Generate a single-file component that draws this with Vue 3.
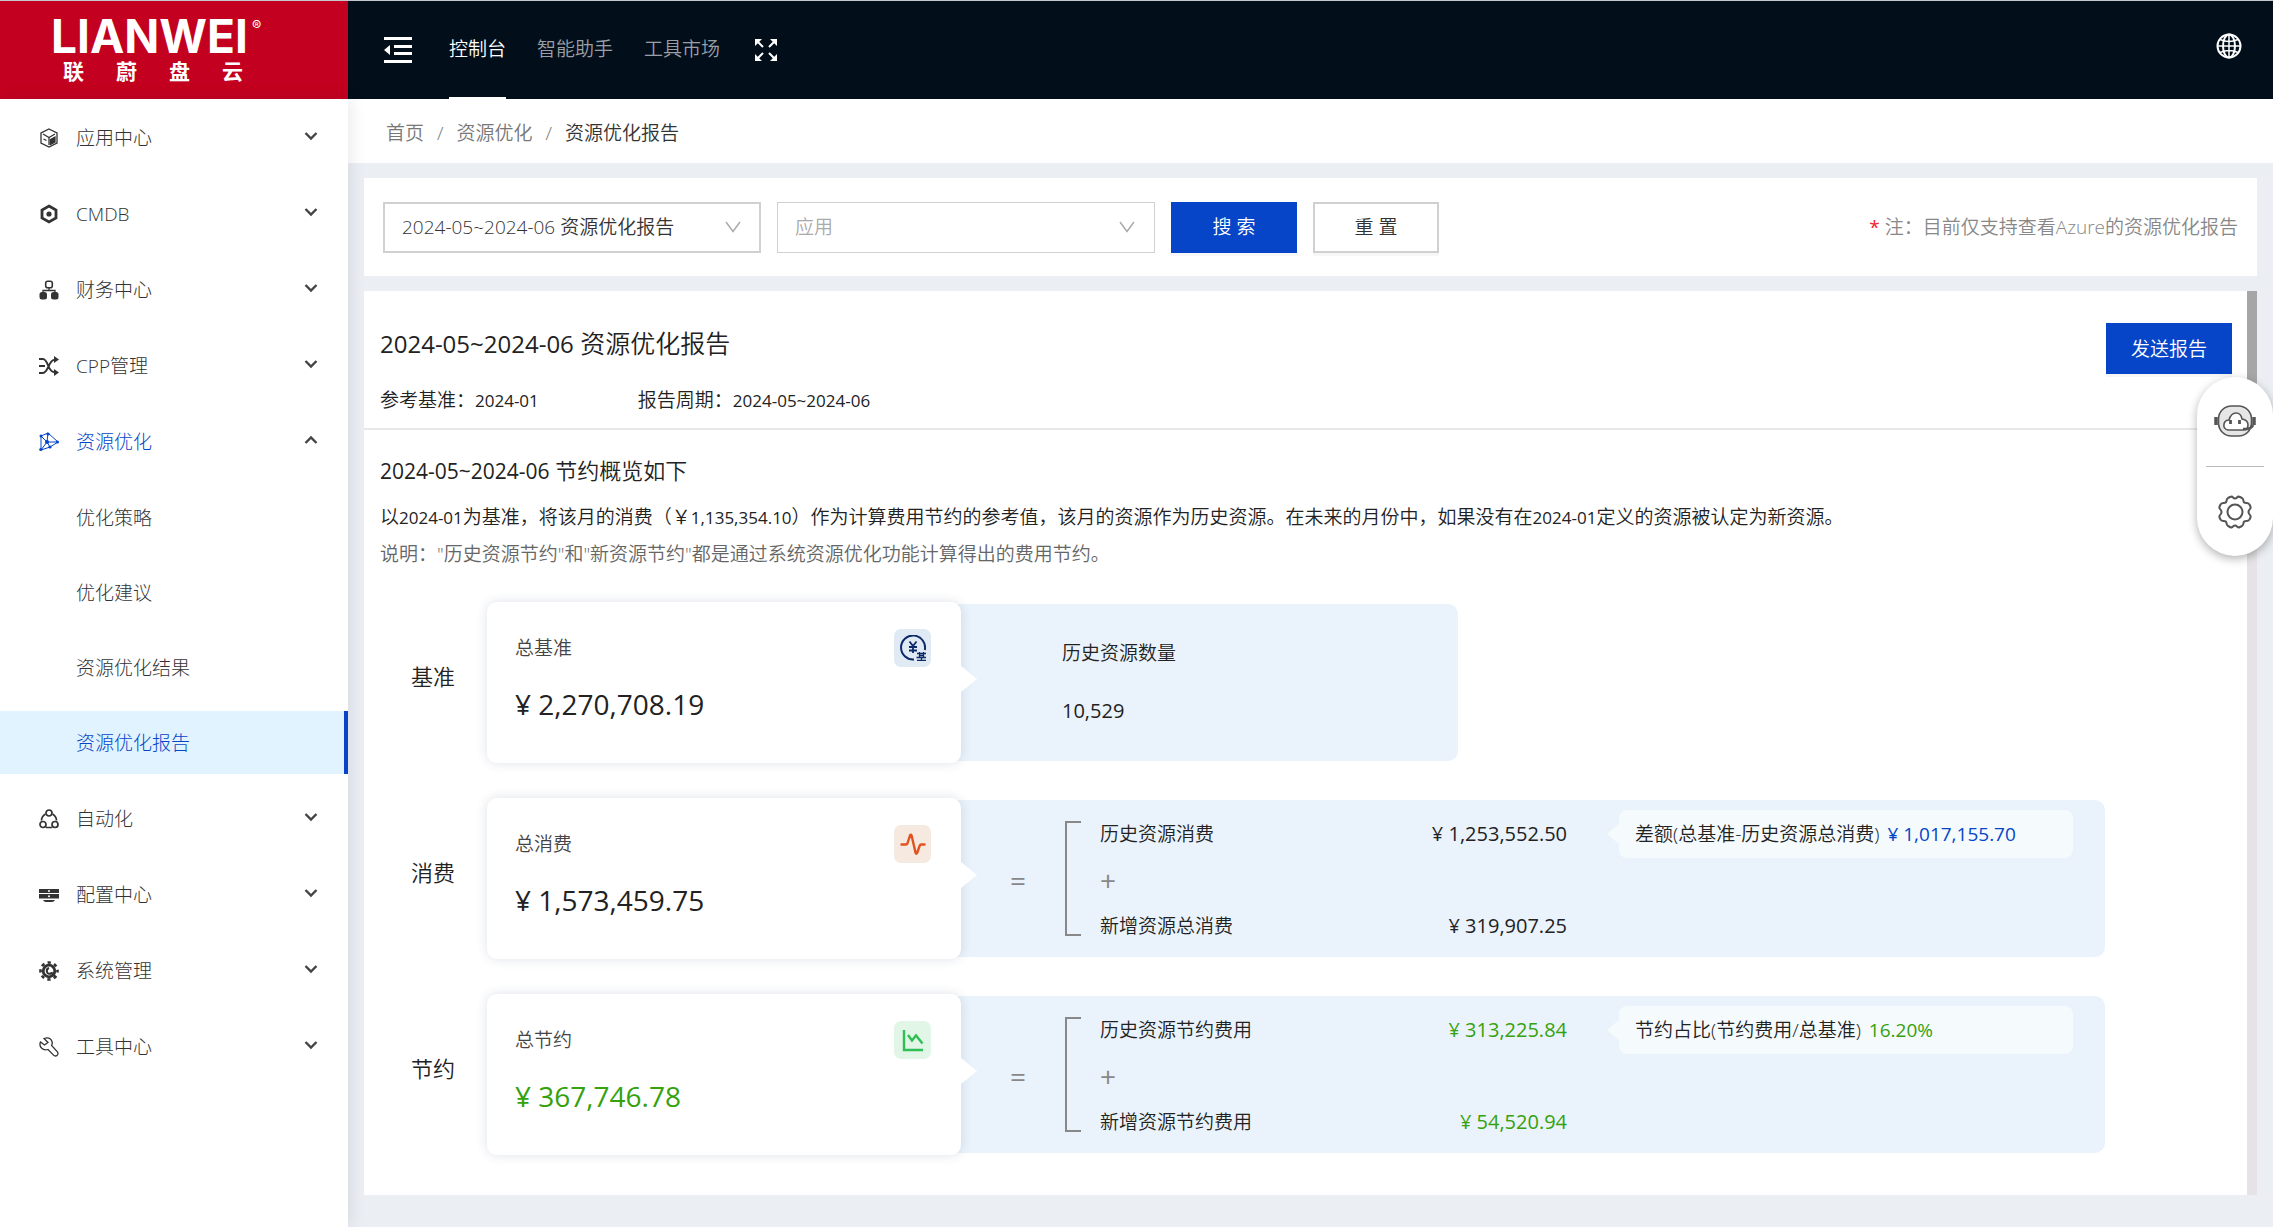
<script setup>
import { ref } from 'vue'

const tabs = ['控制台', '智能助手', '工具市场']
const period = ref('2024-05~2024-06 资源优化报告')
const app = ref('')

const menu = [
  { icon: 'cube', label: '应用中心' },
  { icon: 'hex', label: 'CMDB' },
  { icon: 'org', label: '财务中心' },
  { icon: 'shuffle', label: 'CPP管理' },
  {
    icon: 'mesh',
    label: '资源优化',
    children: ['优化策略', '优化建议', '资源优化结果', '资源优化报告'],
  },
  { icon: 'cycle', label: '自动化' },
  { icon: 'server', label: '配置中心' },
  { icon: 'gear', label: '系统管理' },
  { icon: 'wrench', label: '工具中心' },
]

const rows = [
  {
    label: '基准', title: '总基准', value: '¥ 2,270,708.19', icon: 'coin',
    count: { name: '历史资源数量', value: '10,529' },
  },
  {
    label: '消费', title: '总消费', value: '¥ 1,573,459.75', icon: 'pulse',
    parts: [
      { name: '历史资源消费', value: '¥ 1,253,552.50' },
      { name: '新增资源总消费', value: '¥ 319,907.25' },
    ],
    tip: { name: '差额(总基准-历史资源总消费)', value: '¥ 1,017,155.70', tone: 'blue' },
  },
  {
    label: '节约', title: '总节约', value: '¥ 367,746.78', icon: 'chart', tone: 'green',
    parts: [
      { name: '历史资源节约费用', value: '¥ 313,225.84' },
      { name: '新增资源节约费用', value: '¥ 54,520.94' },
    ],
    tip: { name: '节约占比(节约费用/总基准)', value: '16.20%', tone: 'green' },
  },
]
</script>

<template>
  <div class="page">
    <header class="topbar">
      <a class="brand" href="#">
        <span class="brand-en">LIANWEI<sup>®</sup></span>
        <span class="brand-cn"><span>联</span><span>蔚</span><span>盘</span><span>云</span></span>
      </a>
      <button class="icon-btn fold" aria-label="收起菜单">
        <svg width="28" height="26" viewBox="0 0 28 26" fill="#fff">
          <path d="M0 0h28v3H0zM10 8h18v3H10zM10 15h18v3H10zM0 23h28v3H0zM0 13l6-5v10z" />
        </svg>
      </button>
      <nav class="tabs">
        <a v-for="(t, i) in tabs" :key="t" href="#" :class="{ active: i === 0 }">{{ t }}</a>
      </nav>
      <button class="icon-btn" aria-label="全屏">
        <svg width="24" height="24" viewBox="0 0 24 24" fill="#fff" stroke="#fff" stroke-width="2">
          <path d="M3 3l6 6M21 3l-6 6M3 21l6-6M21 21l-6-6" />
          <path stroke="none" d="M1 1h7L1 8zM23 1v7l-7-7zM1 23v-7l7 7zM23 23h-7l7-7z" />
        </svg>
      </button>
      <button class="icon-btn globe" aria-label="语言">
        <svg width="26" height="26" viewBox="0 0 26 26" fill="none" stroke="#fff" stroke-width="2">
          <circle cx="13" cy="13" r="11.500" /><ellipse cx="13" cy="13" rx="6" ry="11.500" />
          <path d="M13 1v24M1 13h24M4 6.500q9 4 18 0M4 19.500q9-4 18 0" stroke-width="1.500" />
        </svg>
      </button>
    </header>

    <div class="body">
      <aside class="sidebar">
        <ul class="menu">
          <template v-for="m in menu" :key="m.label">
            <li>
              <a href="#" class="item" :class="{ open: m.children }">
                <svg class="mi" width="20" height="20" viewBox="0 0 20 20" fill="none" stroke="currentColor" stroke-width="1.300">
                  <template v-if="m.icon === 'cube'">
                    <path d="M10 1l8 4v10l-8 4-8-4V5z" /><path d="M4 6l6 3.500L16 6M10 9.500V17M4.500 11l3 1.500" />
                    <path d="M11.500 11.500l4.500-2.500v5l-4.500 2.500z" fill="currentColor" />
                  </template>
                  <template v-else-if="m.icon === 'hex'">
                    <path d="M10 2l7 4v8l-7 4-7-4V6z" stroke-width="2.800" /><circle cx="10" cy="10" r="2.600" fill="currentColor" stroke="none" />
                  </template>
                  <template v-else-if="m.icon === 'org'">
                    <rect x="6.700" y="1.200" width="6.600" height="6.600" rx="2" stroke-width="1.600" />
                    <path d="M10 8v2.500M4 13v-2.500h12V13" />
                    <rect x=".5" y="12" width="7.500" height="7.500" rx="2.500" fill="currentColor" stroke="none" />
                    <rect x="12" y="12" width="7.500" height="7.500" rx="2.500" fill="currentColor" stroke="none" />
                  </template>
                  <template v-else-if="m.icon === 'shuffle'">
                    <path d="M0 3h4c5 0 5 13 11 13h2M0 17h4c5 0 6-13 11-13h2M0 10h6" stroke-width="1.900" />
                    <path d="M15 0l5 3.500L15 7zM15 13l5 3.500-5 3.500z" fill="currentColor" stroke="none" />
                  </template>
                  <template v-else-if="m.icon === 'mesh'">
                    <path d="M2 4l7-3 10 9-8 5-9 3zM2 4l6 6L9 1M2 18l6-8h11M8 10l3 5" stroke-width="1" />
                    <g fill="currentColor" stroke="none"><circle cx="2" cy="4" r="1.500" /><circle cx="9" cy="2" r="1.600" /><circle cx="18.500" cy="10" r="1.500" /><circle cx="11" cy="15" r="1.600" /><circle cx="1.800" cy="17.500" r="1.600" /><circle cx="8" cy="10" r="2" /></g>
                  </template>
                  <template v-else-if="m.icon === 'cycle'">
                    <g stroke-width="1.700"><circle cx="10" cy="4" r="3" /><circle cx="4" cy="15.500" r="3" /><circle cx="16" cy="15.500" r="3" />
                      <path d="M6.500 5Q2.500 7.500 2.500 11.500M13.500 5q4 2.500 4 6.500M7 18.500h6" /></g>
                  </template>
                  <template v-else-if="m.icon === 'server'">
                    <g fill="currentColor" stroke="none">
                      <path d="M0 4h20v4H0zM0 9h20v4.500H0zM4 15h12q-1 2-3 2H7q-2 0-3-2z" />
                      <circle cx="10" cy="6" r="1" fill="#fff" /><circle cx="10" cy="11.300" r="1" fill="#fff" />
                    </g>
                  </template>
                  <template v-else-if="m.icon === 'gear'">
                    <circle cx="10" cy="10" r="5.800" stroke-width="2.800" />
                    <circle cx="10" cy="10" r="8.500" stroke-width="2.600" stroke-dasharray="3.300 3.370" stroke-dashoffset="1.650" />
                    <path d="M10 7q-3 1-2 4t5 1l4 5" stroke-width="2" />
                  </template>
                  <template v-else>
                    <path d="M5 1.500q6-2 8 3 .6 2-.4 4l6 6.500q1 2-.7 3.600-2 1-3.400-.5L9 12.500q-4 1.200-6.500-1.500T1.500 5l4 3L9 5.500z" />
                  </template>
                </svg>
                <span>{{ m.label }}</span>
                <svg class="chev" width="14" height="10" viewBox="0 0 14 10" fill="none" stroke="#444" stroke-width="2.400">
                  <path :d="m.children ? 'M1.500 8L7 2.500 12.500 8' : 'M1.500 2L7 7.500 12.500 2'" />
                </svg>
              </a>
            </li>
            <li v-if="m.children">
              <ul class="submenu">
                <li v-for="(c, i) in m.children" :key="c">
                  <a href="#" class="item sub" :class="{ current: i === 3 }">{{ c }}</a>
                </li>
              </ul>
            </li>
          </template>
        </ul>
      </aside>

      <div class="content">
        <nav class="crumbs">
          <a href="#">首页</a><span>/</span><a href="#">资源优化</a><span>/</span><b>资源优化报告</b>
        </nav>

        <main class="main">
          <section class="filters">
            <label class="field">
              <select v-model="period" aria-label="报告">
                <option>2024-05~2024-06 资源优化报告</option>
              </select>
              <svg width="16" height="12" viewBox="0 0 16 12" fill="none" stroke="#aaa" stroke-width="1.500"><path d="M1 1l7 9.500L15 1" /></svg>
            </label>
            <label class="field thin">
              <select v-model="app" aria-label="应用">
                <option value="">应用</option>
              </select>
              <svg width="16" height="12" viewBox="0 0 16 12" fill="none" stroke="#aaa" stroke-width="1.500"><path d="M1 1l7 9.500L15 1" /></svg>
            </label>
            <button class="btn primary">搜 索</button>
            <button class="btn">重 置</button>
            <p class="note"><i>*</i> 注：目前仅支持查看Azure的资源优化报告</p>
          </section>

          <section class="report">
            <div class="report-body">
              <div class="report-head">
                <div>
                  <h1><span>2024-05~2024-06</span> 资源优化报告</h1>
                  <div class="meta">
                    <div>参考基准：<span>2024-01</span></div>
                    <div>报告周期：<span>2024-05~2024-06</span></div>
                  </div>
                </div>
                <button class="btn primary">发送报告</button>
              </div>

              <div class="overview">
                <h2><span>2024-05~2024-06</span> 节约概览如下</h2>
                <p>以<span>2024-01</span>为基准，将该月的消费（￥<span>1,135,354.10</span>）作为计算费用节约的参考值，该月的资源作为历史资源。在未来的月份中，如果没有在<span>2024-01</span>定义的资源被认定为新资源。</p>
                <p class="muted">说明："历史资源节约"和"新资源节约"都是通过系统资源优化功能计算得出的费用节约。</p>
              </div>

              <div v-for="r in rows" :key="r.label" class="row">
                <h3>{{ r.label }}</h3>
                <div class="stage">
                  <div class="panel" :class="{ short: r.count }">
                    <div class="card">
                      <div class="card-top">
                        <span>{{ r.title }}</span>
                        <span class="badge" :class="r.icon">
                          <svg v-if="r.icon === 'coin'" width="26" height="26" viewBox="0 0 26 26" fill="none" stroke="#0b2a66" stroke-width="2">
                            <path d="M14 24.500A12 12 0 1 1 24.800 15" />
                            <path d="M9.500 6.500l3.500 4.500 3.500-4.500M13 11v7M9 12h8M9 15.500h8" stroke-width="1.800" />
                            <path d="M17 18.500h9M16.500 22.500h9.500M17 25.300h9M19.500 17v5.500M23.500 17v5.500M19.500 20.500h4M21.500 22v3" stroke-width="1.300" />
                          </svg>
                          <svg v-else-if="r.icon === 'pulse'" width="26" height="26" viewBox="0 0 26 26" fill="none" stroke="#e0531f" stroke-width="2.400" stroke-linejoin="round" stroke-linecap="round">
                            <path d="M1.500 13.500h4.500q1 0 1.400-1L10 4.500q.8-1.500 1.600 0l4 17.500q.7 1.500 1.500 0l2.500-7q.5-1.500 1.500-1.500h3.400" />
                          </svg>
                          <svg v-else width="26" height="26" viewBox="0 0 26 26" fill="none" stroke="#2fbf55" stroke-width="2.400">
                            <path d="M4 3v20h19M8 8l4 5.500L16 8.500l6.500 8" />
                          </svg>
                        </span>
                      </div>
                      <strong :class="r.tone">{{ r.value }}</strong>
                    </div>

                    <div v-if="r.count" class="count">
                      <span>{{ r.count.name }}</span>
                      <span class="num">{{ r.count.value }}</span>
                    </div>
                    <template v-else>
                      <span class="eq">=</span>
                      <span class="bracket"></span>
                      <div class="parts">
                        <div><span>{{ r.parts[0].name }}</span><span class="num" :class="r.tone">{{ r.parts[0].value }}</span></div>
                        <div class="plus">+</div>
                        <div><span>{{ r.parts[1].name }}</span><span class="num" :class="r.tone">{{ r.parts[1].value }}</span></div>
                      </div>
                      <div class="tip"><span>{{ r.tip.name }}</span><span class="tip-num" :class="r.tip.tone">{{ r.tip.value }}</span></div>
                    </template>
                  </div>
                </div>
              </div>
            </div>
            <div class="track"><div class="thumb"></div></div>
          </section>
        </main>
      </div>
    </div>

    <div class="float">
      <button aria-label="客服">
        <svg width="42" height="32" viewBox="0 0 42 32" fill="none" stroke="#555" stroke-width="1.600">
          <rect x="4.500" y="1" width="33" height="30" rx="13" fill="#e6e6e6" />
          <path d="M14 25q-5-1-4-6 1-4 5-4 2-7 7-7t6 6q6 1 6 6 0 5-5 5z" fill="#fff" />
          <path d="M16.500 15v4M25.500 15v4" stroke-width="2.800" /><path d="M2 12v8M40 12v8" stroke-width="3.500" />
          <path d="M39 20q-1 3-6 4h-4" stroke-width="2.500" />
        </svg>
      </button>
      <hr>
      <button aria-label="设置">
        <svg width="34" height="34" viewBox="0 0 34 34" fill="none" stroke="#555" stroke-width="2" stroke-linejoin="round">
          <circle cx="17" cy="17" r="7.500" />
          <path d="M12 2q2-1 3 .5 2 2 4 0 1-1.500 3-.5l2 1q1.500 1 1.500 3t3 2q2 0 3 1.500l1 2q.5 2-1 3-2 2.500 0 5 1.500 1 1 3l-1 2q-1 1.500-3 1.500-3 0-3 2t-1.500 3l-2 1q-2 1-3-.5-2-2-4 0-1 1.500-3 .5l-2-1q-1.500-1-1.500-3t-3-2q-2 0-3-1.500l-1-2q-.5-2 1-3 2-2.500 0-5-1.500-1-1-3l1-2q1-1.500 3-1.500 3 0 3-2t1.500-3z" />
        </svg>
      </button>
    </div>
  </div>
</template>

<style>
body {
  margin: 0;
}
</style>

<style scoped>
.page {
  min-height: 100vh;
  display: flex;
  flex-direction: column;
  box-sizing: border-box;
  border-top: 1px solid #c4c8cc;
  background: #ebeef3;
  color: #222;
  font: 350 19px/28px "Open Sans", "Noto Sans CJK SC", sans-serif;
}
.page * {
  box-sizing: border-box;
}
a {
  color: inherit;
  text-decoration: none;
}
ul, h1, h2, h3, p {
  margin: 0;
  padding: 0;
  list-style: none;
  font-weight: 350;
}
button {
  font: inherit;
  cursor: pointer;
}
svg {
  display: block;
}
.topbar {
  display: flex;
  align-items: center;
  height: 98px;
  background: #020f1b;
  color: #fff;
}
.brand {
  width: 348px;
  height: 98px;
  padding: 13px 0 0 51px;
  background: #c3001f;
}
.brand-en {
  display: flex;
  align-items: flex-start;
  gap: 4px;
  font: 700 46px/44px Inter, sans-serif;
}
.brand-en sup {
  font: 400 14px/24px Inter, sans-serif;
}
.brand-cn {
  display: flex;
  justify-content: space-between;
  width: 180px;
  margin-left: 12px;
  font: 700 21px/28px "Liberation Sans", "Noto Sans CJK SC", sans-serif;
}
.icon-btn {
  padding: 0;
  border: 0;
  background: none;
}
.fold {
  margin: 0 37px 0 36px;
}
.tabs {
  display: flex;
  gap: 31px;
  margin-right: 34px;
  color: #9a9fa5;
}
.tabs a {
  height: 98px;
  line-height: 96px;
}
.tabs .active {
  color: #fff;
  border-bottom: 2px solid #fff;
}
.globe {
  margin: 0 31px 8px auto;
}
.body {
  flex: 1;
  display: flex;
}
.sidebar {
  position: relative;
  width: 348px;
  padding-top: 7px;
  background: #fff;
  box-shadow: 2px 0 16px rgba(30, 30, 60, 0.1);
  font-weight: 300;
}
.menu {
  display: flex;
  flex-direction: column;
  gap: 13px;
}
.menu, .submenu {
  font-weight: 300;
}
.submenu {
  display: flex;
  flex-direction: column;
  gap: 12px;
}
.item {
  display: flex;
  align-items: center;
  height: 63px;
  padding: 0 30px 0 39px;
  color: #333;
}
.mi {
  margin-right: 17px;
}
.chev {
  margin: 0 0 4px auto;
}
.open, .current {
  color: #0645c8;
}
.sub {
  padding-left: 76px;
}
.current {
  background: #e0f3ff;
  border-right: 4px solid #0645c8;
}
.content {
  flex: 1;
  display: flex;
  flex-direction: column;
  min-width: 0;
}
.crumbs {
  display: flex;
  align-items: center;
  gap: 13px;
  height: 64px;
  padding: 4px 38px 0;
  background: #fff;
  color: #777;
}
.crumbs b {
  color: #333;
  font-weight: 350;
}
.main {
  flex: 1;
  display: flex;
  flex-direction: column;
  gap: 15px;
  padding: 15px 16px 32px;
}
.filters {
  display: flex;
  align-items: center;
  gap: 16px;
  height: 98px;
  padding: 0 19px;
  background: #fff;
}
.field {
  display: flex;
  align-items: center;
  width: 378px;
}
.field select {
  width: 100%;
  height: 51px;
  padding: 0 48px 0 17px;
  appearance: none;
  border: 2px solid #d0d0d0;
  border-radius: 0;
  background: #fff;
  color: #333;
  font: inherit;
}
.field svg {
  margin-left: -36px;
  pointer-events: none;
}
.thin select {
  border-width: 1px;
  color: #aaa;
}
.btn {
  width: 126px;
  height: 51px;
  padding: 0;
  border: 2px solid #d0d0d0;
  background: #fff;
  color: #333;
  box-shadow: 0 3px 0 rgba(0, 0, 0, 0.03);
}
.primary {
  border-color: #0645c8;
  background: #0645c8;
  color: #fff;
}
.note {
  margin-left: auto;
  color: #888;
}
.note i {
  color: #f5222d;
  font-weight: 400;
  font-style: normal;
}
.report {
  flex: 1;
  display: flex;
  background: #fff;
}
.report-body {
  flex: 1;
  padding-bottom: 30px;
}
.report-head {
  display: flex;
  justify-content: space-between;
  align-items: flex-start;
  height: 139px;
  padding: 32px 15px 0 16px;
  border-bottom: 2px solid #e8e8e8;
}
h1 {
  font-size: 25px;
  line-height: 40px;
}
h1 span {
  font-weight: 400;
  font-size: 24px;
}
.meta {
  display: flex;
  gap: 99px;
  margin-top: 22px;
}
.meta span, .overview p span {
  font-weight: 400;
  font-size: 17px;
}
.overview {
  padding: 23px 16px 0;
}
h2 {
  margin-bottom: 11px;
  font-size: 22px;
  line-height: 34px;
}
h2 span {
  font-weight: 400;
  font-size: 21px;
}
.overview p {
  line-height: 36px;
}
.overview .muted {
  color: #666;
}
.row {
  display: flex;
  align-items: center;
  height: 160px;
  margin-top: 36px;
}
.overview + .row {
  margin-top: 30px;
}
h3 {
  width: 76px;
  margin-left: 47px;
  padding-bottom: 12px;
  font-size: 22px;
  line-height: 32px;
}
.stage {
  flex: 1;
  margin-right: 142px;
}
.panel {
  display: flex;
  align-items: center;
  height: 157px;
  border-radius: 10px;
  background: #eaf3fb;
}
.short {
  width: 60%;
}
.card {
  position: relative;
  flex: 0 0 474px;
  height: 161px;
  padding: 27px 30px 0 28px;
  border-radius: 10px;
  background: #fff;
  box-shadow: 0 0 12px rgba(30, 50, 90, 0.14);
}
.card::after {
  content: "";
  position: absolute;
  top: 64px;
  left: 100%;
  border: 13px solid transparent;
  border-left: 16px solid #fff;
  border-right: 0;
}
.card-top {
  display: flex;
  justify-content: space-between;
  align-items: center;
  height: 38px;
  color: #444;
}
.badge {
  display: grid;
  place-items: center;
  width: 37px;
  height: 38px;
  border-radius: 7px;
}
.coin {
  background: #e0eaf5;
}
.pulse {
  background: #f6eae0;
}
.chart {
  background: #e2f6e8;
}
.card strong {
  display: block;
  margin-top: 17px;
  font-weight: 400;
  font-size: 28px;
  line-height: 40px;
}
.green {
  color: #35a10c;
}
.blue {
  color: #0645c8;
}
.num {
  font-weight: 400;
  font-size: 20px;
}
.tip-num {
  font-weight: 400;
}
.count {
  display: flex;
  flex-direction: column;
  gap: 30px;
  margin-left: 101px;
}
.eq, .plus {
  color: #888;
  font-weight: 400;
  font-size: 28px;
}
.eq {
  width: 16px;
  margin: 4px 39px 0 49px;
}
.bracket {
  width: 16px;
  height: 115px;
  border: 2px solid #888;
  border-right: 0;
}
.parts {
  display: flex;
  flex-direction: column;
  gap: 20px;
  flex: 0 0 467px;
  margin: 4px 0 0 19px;
  line-height: 26px;
}
.parts div {
  display: flex;
  justify-content: space-between;
}
.tip {
  position: relative;
  align-self: flex-start;
  flex: 1;
  display: flex;
  align-items: center;
  gap: 8px;
  height: 48px;
  margin: 10px 32px 0 52px;
  padding-left: 16px;
  border-radius: 8px;
  background: #f5fafd;
  white-space: nowrap;
}
.tip::before {
  content: "";
  position: absolute;
  top: 14px;
  right: 100%;
  border: 10px solid transparent;
  border-right: 12px solid #f5fafd;
  border-left: 0;
}
.track {
  width: 10px;
  background: #e5e3e5;
}
.thumb {
  height: 200px;
  background: #a6a6a6;
}
.float {
  position: absolute;
  top: 377px;
  right: 0;
  display: flex;
  flex-direction: column;
  align-items: center;
  justify-content: space-between;
  width: 76px;
  height: 179px;
  padding: 28px 9px 27px;
  border-radius: 38px;
  background: #fff;
  box-shadow: 0 3px 10px rgba(0, 0, 0, 0.3);
}
.float button {
  padding: 0;
  border: 0;
  background: none;
}
.float hr {
  width: 100%;
  margin: 0;
  border: 0;
  border-top: 1px solid #bbb;
}
</style>
